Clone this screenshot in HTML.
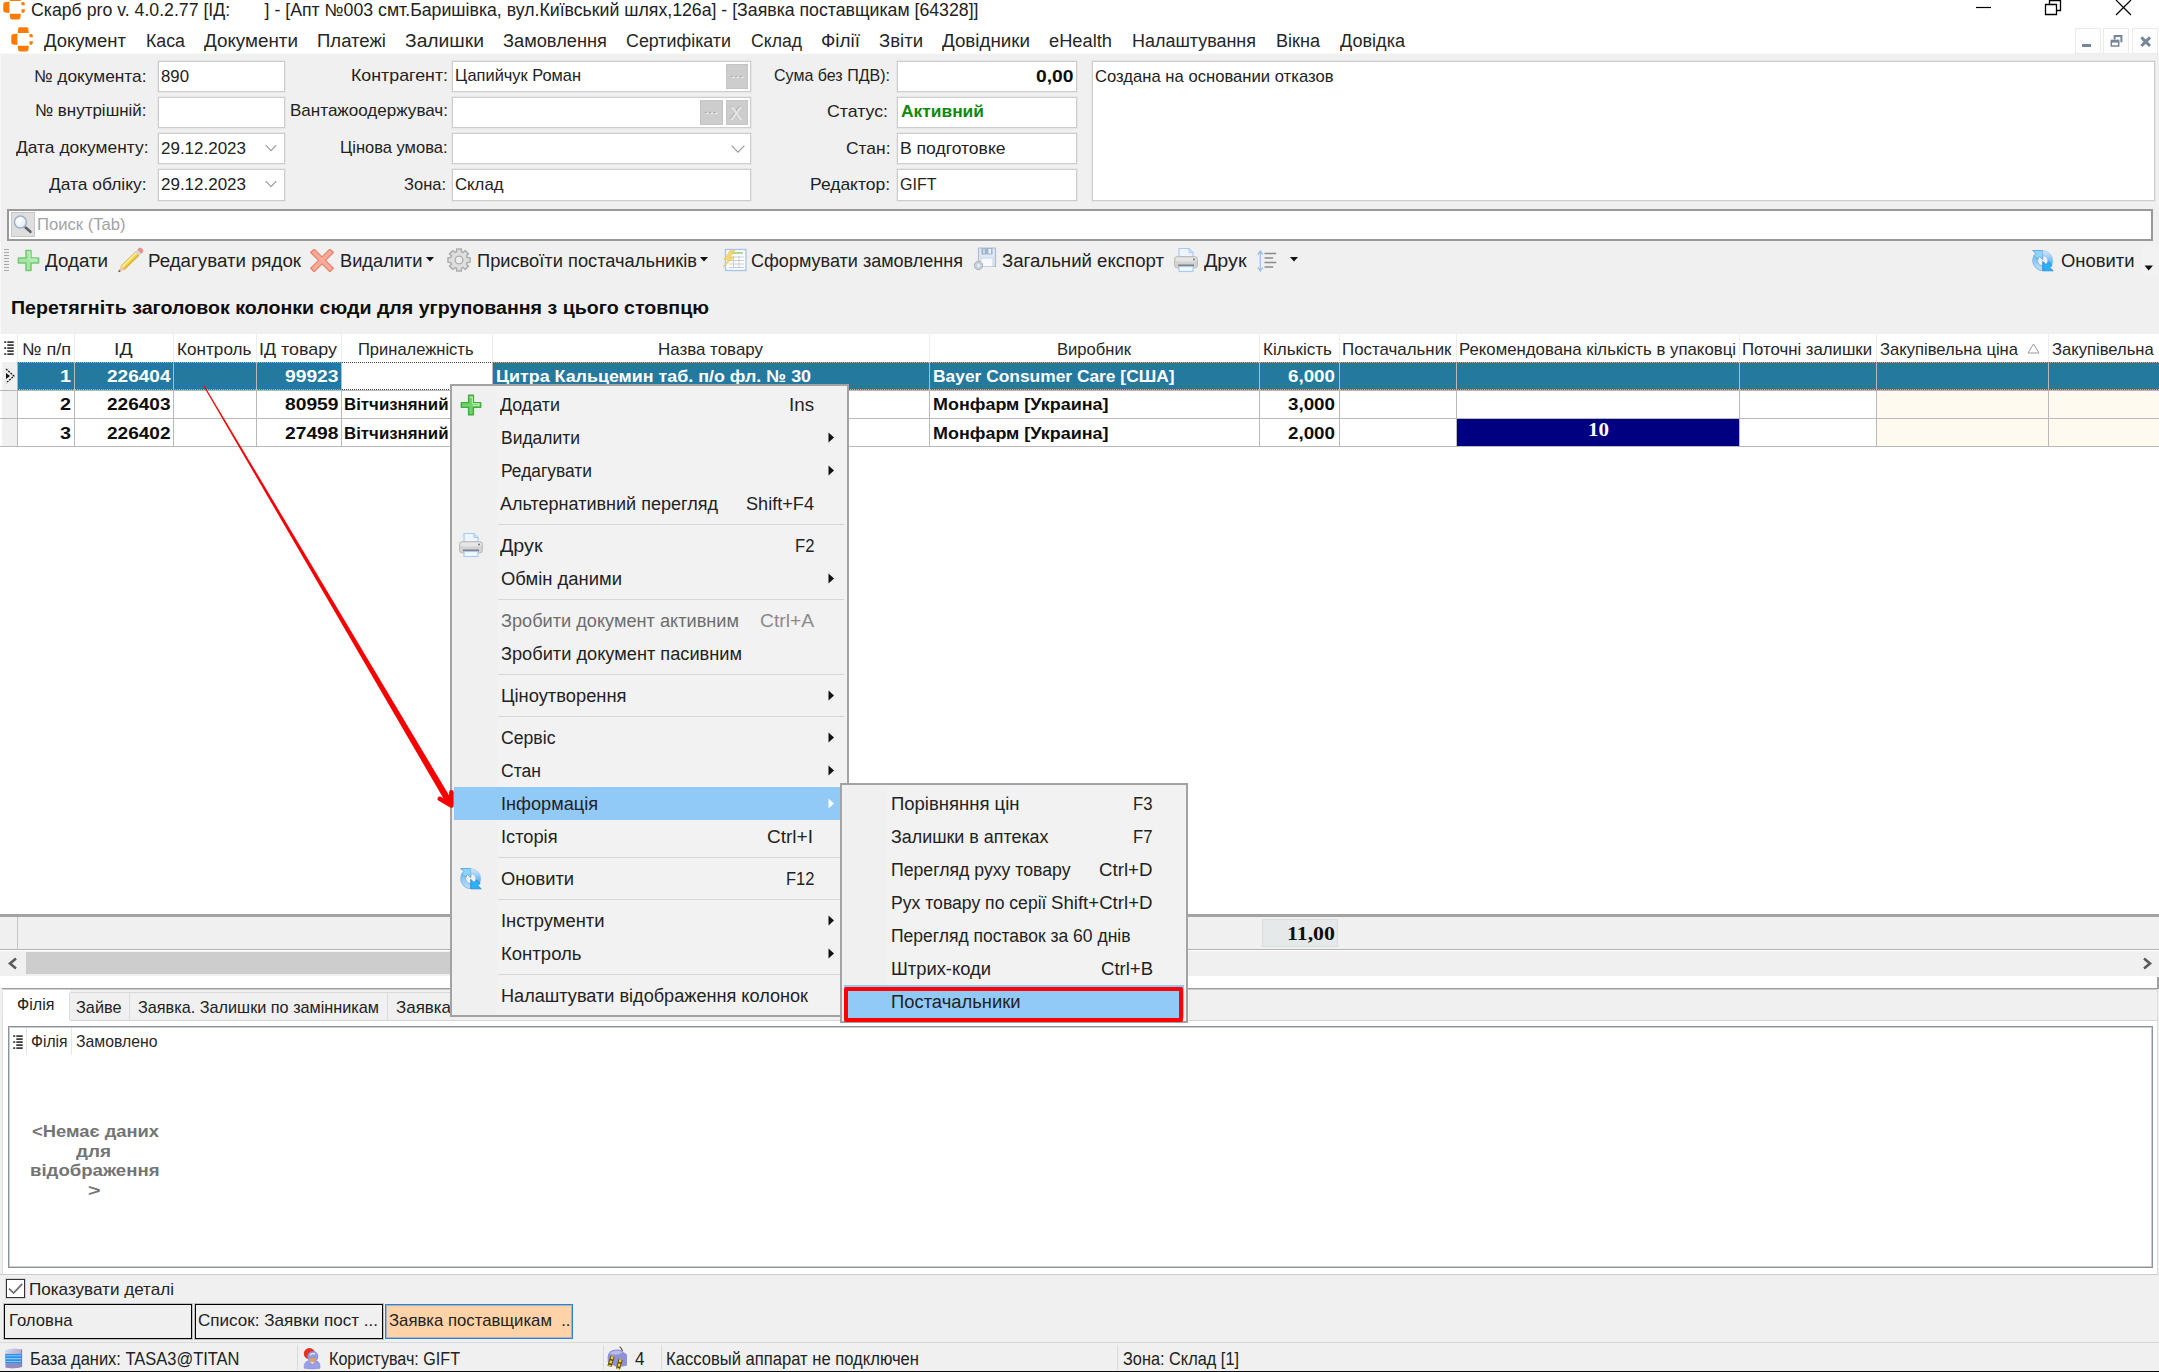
<!DOCTYPE html>
<html lang="uk"><head><meta charset="utf-8"><title>Скарб pro</title>
<style>
html,body{margin:0;padding:0;background:#fff;}
body{width:2159px;height:1372px;overflow:hidden;font-family:"Liberation Sans",sans-serif;}
#root{position:relative;width:2159px;height:1372px;overflow:hidden;background:#fff;}
#root div,#root span.t,#root svg{position:absolute;box-sizing:border-box;}
span.t{white-space:pre;color:#000;transform-origin:0 50%;display:block;}
.b{font-weight:bold;}

</style></head>
<body>
<div id="root">
<div style="left:0px;top:53px;width:2159px;height:281px;background:#f0f0f0"></div>
<div style="left:0px;top:951px;width:2159px;height:25px;background:#f0f0f0"></div>
<div style="left:0px;top:988px;width:2159px;height:384px;background:#f0f0f0"></div>
<svg style="left:2.8px;top:-4.6px" width="22" height="25" viewBox="0 0 22 25"><path d="M6.7 5.9L7.2 1.6Q7.5 0.2 9 0.2H15.5Q17 0.2 17.3 1.6L17.8 5.9Z" fill="#ff7a00"/><path d="M6.4 6.6L1.9 7.2Q0.3 7.5 0.3 9V15.6Q0.3 17.1 1.9 17.4L6.4 18Z" fill="#ff7a00"/><path d="M6.7 18.7L7.2 23Q7.5 24.4 9 24.4H15.5Q17 24.4 17.3 23L17.8 18.7Z" fill="#ff7a00"/><path d="M18.5 6.9H20.3Q21.8 7.2 21.8 8.8V10.3H18.5Z" fill="#ff7a00"/><path d="M18.5 17.7H20.3Q21.8 17.4 21.8 15.8V14.3H18.5Z" fill="#ff7a00"/></svg>
<span class="t " style="top:0px;font-size:17.5px;line-height:20px;height:20px;color:#222222;left:30.5px;transform:scaleX(1.0116);">Скарб pro v. 4.0.2.77 [ІД:       ] - [Апт №003 смт.Баришівка, вул.Київський шлях,126а] - [Заявка поставщикам [64328]]</span>
<svg style="left:1970px;top:0px" width="170" height="20" viewBox="0 0 170 20"><path d="M6 7.5H21" stroke="#000" stroke-width="1.2" fill="none"/><path d="M75.5 4.5H86.5V14.5H75.5Z M79.5 4.5V0.5H90.5V10.5H86.5" stroke="#000" stroke-width="1.3" fill="none"/><path d="M146 0L161 15M161 0L146 15" stroke="#000" stroke-width="1.3" fill="none"/></svg>
<svg style="left:11.4px;top:27px" width="22" height="25" viewBox="0 0 22 25"><path d="M6.7 5.9L7.2 1.6Q7.5 0.2 9 0.2H15.5Q17 0.2 17.3 1.6L17.8 5.9Z" fill="#ff7a00"/><path d="M6.4 6.6L1.9 7.2Q0.3 7.5 0.3 9V15.6Q0.3 17.1 1.9 17.4L6.4 18Z" fill="#ff7a00"/><path d="M6.7 18.7L7.2 23Q7.5 24.4 9 24.4H15.5Q17 24.4 17.3 23L17.8 18.7Z" fill="#ff7a00"/><path d="M18.5 6.9H20.3Q21.8 7.2 21.8 8.8V10.3H18.5Z" fill="#ff7a00"/><path d="M18.5 17.7H20.3Q21.8 17.4 21.8 15.8V14.3H18.5Z" fill="#ff7a00"/></svg>
<span class="t " style="top:31px;font-size:18px;line-height:20px;height:20px;color:#262626;left:44.0px;transform:scaleX(1.0268);">Документ</span>
<span class="t " style="top:31px;font-size:18px;line-height:20px;height:20px;color:#262626;left:146.0px;transform:scaleX(0.9870);">Каса</span>
<span class="t " style="top:31px;font-size:18px;line-height:20px;height:20px;color:#262626;left:204.0px;transform:scaleX(1.0455);">Документи</span>
<span class="t " style="top:31px;font-size:18px;line-height:20px;height:20px;color:#262626;left:317.0px;transform:scaleX(1.0306);">Платежі</span>
<span class="t " style="top:31px;font-size:18px;line-height:20px;height:20px;color:#262626;left:405.0px;transform:scaleX(1.0703);">Залишки</span>
<span class="t " style="top:31px;font-size:18px;line-height:20px;height:20px;color:#262626;left:503.0px;transform:scaleX(1.0140);">Замовлення</span>
<span class="t " style="top:31px;font-size:18px;line-height:20px;height:20px;color:#262626;left:626.0px;transform:scaleX(0.9913);">Сертифікати</span>
<span class="t " style="top:31px;font-size:18px;line-height:20px;height:20px;color:#262626;left:751.0px;transform:scaleX(0.9790);">Склад</span>
<span class="t " style="top:31px;font-size:18px;line-height:20px;height:20px;color:#262626;left:821.0px;transform:scaleX(1.0487);">Філії</span>
<span class="t " style="top:31px;font-size:18px;line-height:20px;height:20px;color:#262626;left:879.0px;transform:scaleX(1.0296);">Звіти</span>
<span class="t " style="top:31px;font-size:18px;line-height:20px;height:20px;color:#262626;left:942.0px;transform:scaleX(1.0426);">Довідники</span>
<span class="t " style="top:31px;font-size:18px;line-height:20px;height:20px;color:#262626;left:1049.0px;transform:scaleX(1.0154);">eHealth</span>
<span class="t " style="top:31px;font-size:18px;line-height:20px;height:20px;color:#262626;left:1132.0px;transform:scaleX(0.9966);">Налаштування</span>
<span class="t " style="top:31px;font-size:18px;line-height:20px;height:20px;color:#262626;left:1276.0px;transform:scaleX(1.0036);">Вікна</span>
<span class="t " style="top:31px;font-size:18px;line-height:20px;height:20px;color:#262626;left:1340.0px;transform:scaleX(1.0039);">Довідка</span>
<div style="left:2075px;top:28px;width:26px;height:26px;background:#fefefe;border:1px solid #ebebeb"></div>
<div style="left:2103px;top:28px;width:26px;height:26px;background:#fefefe;border:1px solid #ebebeb"></div>
<div style="left:2132px;top:28px;width:26px;height:26px;background:#fefefe;border:1px solid #ebebeb"></div>
<svg style="left:2075px;top:28px" width="84" height="26" viewBox="0 0 84 26"><rect x="7" y="16" width="9" height="3" fill="#74869a"/><path d="M39.6 11.5V8.1H46.4V14.3" stroke="#74869a" stroke-width="2" fill="none"/><rect x="35.6" y="11.7" width="8.8" height="2.9" fill="#74869a"/><path d="M36.3 14V18H43.7V14" stroke="#74869a" stroke-width="1.5" fill="none"/><path d="M66.4 9.4L75 18M75 9.4L66.4 18" stroke="#74869a" stroke-width="3" fill="none"/></svg>
<div style="left:0px;top:53px;width:2074px;height:1px;background:#fafafa"></div>
<div style="left:0px;top:53px;width:1px;height:281px;background:#f8f8f8"></div>
<div style="left:158px;top:61px;width:127px;height:31px;background:#fff;border:1px solid #cdcdcd;box-shadow:0 0 0 1px rgba(0,0,0,0.035);"></div>
<div style="left:452px;top:61px;width:299px;height:31px;background:#fff;border:1px solid #cdcdcd;box-shadow:0 0 0 1px rgba(0,0,0,0.035);"></div>
<div style="left:897px;top:61px;width:180px;height:31px;background:#fff;border:1px solid #cdcdcd;box-shadow:0 0 0 1px rgba(0,0,0,0.035);"></div>
<div style="left:158px;top:97px;width:127px;height:31px;background:#fff;border:1px solid #cdcdcd;box-shadow:0 0 0 1px rgba(0,0,0,0.035);"></div>
<div style="left:452px;top:97px;width:299px;height:31px;background:#fff;border:1px solid #cdcdcd;box-shadow:0 0 0 1px rgba(0,0,0,0.035);"></div>
<div style="left:897px;top:97px;width:180px;height:31px;background:#fff;border:1px solid #cdcdcd;box-shadow:0 0 0 1px rgba(0,0,0,0.035);"></div>
<div style="left:158px;top:133px;width:127px;height:31px;background:#fff;border:1px solid #cdcdcd;box-shadow:0 0 0 1px rgba(0,0,0,0.035);"></div>
<div style="left:452px;top:133px;width:299px;height:31px;background:#fff;border:1px solid #cdcdcd;box-shadow:0 0 0 1px rgba(0,0,0,0.035);"></div>
<div style="left:897px;top:133px;width:180px;height:31px;background:#fff;border:1px solid #cdcdcd;box-shadow:0 0 0 1px rgba(0,0,0,0.035);"></div>
<div style="left:158px;top:169px;width:127px;height:32px;background:#fff;border:1px solid #cdcdcd;box-shadow:0 0 0 1px rgba(0,0,0,0.035);"></div>
<div style="left:452px;top:169px;width:299px;height:32px;background:#fff;border:1px solid #cdcdcd;box-shadow:0 0 0 1px rgba(0,0,0,0.035);"></div>
<div style="left:897px;top:169px;width:180px;height:32px;background:#fff;border:1px solid #cdcdcd;box-shadow:0 0 0 1px rgba(0,0,0,0.035);"></div>
<div style="left:1092px;top:61px;width:1063px;height:140px;background:#fff;border:1px solid #cdcdcd;box-shadow:0 0 0 1px rgba(0,0,0,0.035);"></div>
<span class="t " style="top:67px;font-size:17px;line-height:19px;height:19px;color:#222222;left:34.0px;transform:scaleX(1.0174);">№ документа:</span>
<span class="t " style="top:101px;font-size:17px;line-height:19px;height:19px;color:#222222;left:35.0px;transform:scaleX(0.9962);">№ внутрішній:</span>
<span class="t " style="top:138px;font-size:17px;line-height:19px;height:19px;color:#222222;left:15.5px;transform:scaleX(1.0238);">Дата документу:</span>
<span class="t " style="top:175px;font-size:17px;line-height:19px;height:19px;color:#222222;left:49.0px;transform:scaleX(1.0226);">Дата обліку:</span>
<span class="t " style="top:67px;font-size:17px;line-height:19px;height:19px;color:#222222;left:160.5px;transform:scaleX(0.9868);">890</span>
<span class="t " style="top:139px;font-size:17px;line-height:19px;height:19px;color:#222222;left:161.0px;transform:scaleX(0.9989);">29.12.2023</span>
<span class="t " style="top:175px;font-size:17px;line-height:19px;height:19px;color:#222222;left:161.0px;transform:scaleX(0.9989);">29.12.2023</span>
<svg style="left:263px;top:143.2px" width="16" height="10" viewBox="0 0 16 10"><path d="M2.7 2.2L8 7.6L13.3 2.2" stroke="#9c9c9c" stroke-width="1.2" fill="none"/></svg>
<svg style="left:263px;top:179.4px" width="16" height="10" viewBox="0 0 16 10"><path d="M2.7 2.2L8 7.6L13.3 2.2" stroke="#9c9c9c" stroke-width="1.2" fill="none"/></svg>
<svg style="left:729.5px;top:143.6px" width="16" height="10" viewBox="0 0 16 10"><path d="M1.6 1.6L8 8.2L14.4 1.6" stroke="#9a9a9a" stroke-width="1.2" fill="none"/></svg>
<span class="t " style="top:66px;font-size:17px;line-height:19px;height:19px;color:#222222;left:350.5px;transform:scaleX(1.0472);">Контрагент:</span>
<span class="t " style="top:101px;font-size:17px;line-height:19px;height:19px;color:#222222;left:289.5px;transform:scaleX(1.0029);">Вантажоодержувач:</span>
<span class="t " style="top:138px;font-size:17px;line-height:19px;height:19px;color:#222222;left:340.0px;transform:scaleX(0.9712);">Цінова умова:</span>
<span class="t " style="top:175px;font-size:17px;line-height:19px;height:19px;color:#222222;left:404.0px;transform:scaleX(0.9700);">Зона:</span>
<span class="t " style="top:66px;font-size:17px;line-height:19px;height:19px;color:#222222;left:454.5px;transform:scaleX(0.9640);">Цапийчук Роман</span>
<span class="t " style="top:175px;font-size:17px;line-height:19px;height:19px;color:#222222;left:454.5px;transform:scaleX(0.9857);">Склад</span>
<div style="left:726px;top:64px;width:22px;height:25px;background:#cdcdcd;border:1px solid #c5c5c5;"></div>
<div style="left:700px;top:100px;width:23px;height:25px;background:#cdcdcd;border:1px solid #c5c5c5;"></div>
<div style="left:726px;top:100px;width:22px;height:25px;background:#cdcdcd;border:1px solid #c5c5c5;"></div>
<span class="t " style="top:68px;font-size:11px;line-height:12px;height:12px;color:#fafafa;left:730.5px;transform:scaleX(1.4719);text-shadow:-1px -1px 0 #a0a0a0;">...</span>
<span class="t " style="top:104px;font-size:11px;line-height:12px;height:12px;color:#fafafa;left:705.0px;transform:scaleX(1.4719);text-shadow:-1px -1px 0 #a0a0a0;">...</span>
<span class="t " style="top:104px;font-size:18px;line-height:20px;height:20px;color:#e9e9e9;left:730.0px;transform:scaleX(1.0403);text-shadow:-1px -1px 0 #b4b4b4;">X</span>
<span class="t " style="top:66px;font-size:17px;line-height:19px;height:19px;color:#222222;left:774.0px;transform:scaleX(0.9426);">Сума без ПДВ):</span>
<span class="t " style="top:102px;font-size:17px;line-height:19px;height:19px;color:#222222;left:826.5px;transform:scaleX(1.0433);">Статус:</span>
<span class="t " style="top:139px;font-size:17px;line-height:19px;height:19px;color:#222222;left:845.5px;transform:scaleX(1.0241);">Стан:</span>
<span class="t " style="top:175px;font-size:17px;line-height:19px;height:19px;color:#222222;left:810.0px;transform:scaleX(1.0269);">Редактор:</span>
<span class="t " style="top:67px;font-size:17px;line-height:19px;height:19px;color:#0d0d0d;font-weight:bold;left:1035.5px;transform:scaleX(1.1331);">0,00</span>
<span class="t " style="top:102px;font-size:17px;line-height:19px;height:19px;color:#0b8a0b;font-weight:bold;left:900.5px;transform:scaleX(1.0223);">Активний</span>
<span class="t " style="top:139px;font-size:17px;line-height:19px;height:19px;color:#222222;left:899.5px;transform:scaleX(1.0308);">В подготовке</span>
<span class="t " style="top:175px;font-size:17px;line-height:19px;height:19px;color:#222222;left:900.0px;transform:scaleX(0.9427);">GIFT</span>
<span class="t " style="top:67px;font-size:17px;line-height:19px;height:19px;color:#222222;left:1095.0px;transform:scaleX(0.9786);">Создана на основании отказов</span>
<div style="left:7px;top:209px;width:2146px;height:32px;background:#fff;border:2px solid #999;"></div>
<div style="left:11px;top:212px;width:24px;height:25px;background:#dedede;border:1px solid #c6c6c6;"></div>
<svg style="left:12px;top:213px" width="22" height="24" viewBox="0 0 22 24"><defs><radialGradient id="mg" cx="0.4" cy="0.35" r="0.8"><stop offset="0" stop-color="#ffffff"/><stop offset="1" stop-color="#dbe6fb"/></radialGradient></defs><path d="M13.6 14.6L18.4 18.8" stroke="#5b5f66" stroke-width="2.6" stroke-linecap="round"/><circle cx="8.4" cy="9" r="6" fill="url(#mg)" stroke="#9fb0c6" stroke-width="1.5"/></svg>
<span class="t " style="top:215px;font-size:17px;line-height:19px;height:19px;color:#a2a2a8;left:36.5px;transform:scaleX(0.9772);">Поиск (Tab)</span>
<div style="left:4px;top:249px;width:5px;height:1px;background:#a8a8a8"></div>
<div style="left:4px;top:252px;width:5px;height:1px;background:#a8a8a8"></div>
<div style="left:4px;top:255px;width:5px;height:1px;background:#a8a8a8"></div>
<div style="left:4px;top:258px;width:5px;height:1px;background:#a8a8a8"></div>
<div style="left:4px;top:261px;width:5px;height:1px;background:#a8a8a8"></div>
<div style="left:4px;top:264px;width:5px;height:1px;background:#a8a8a8"></div>
<div style="left:4px;top:267px;width:5px;height:1px;background:#a8a8a8"></div>
<div style="left:4px;top:270px;width:5px;height:1px;background:#a8a8a8"></div>
<svg style="left:17px;top:249px" width="23" height="23" viewBox="0 0 23 23"><path d="M9 1.4H14V9H21.6V14H14V21.6H9V14H1.4V9H9Z" fill="#a6e6a2" stroke="#72c970" stroke-width="1.5" stroke-linejoin="round"/><path d="M10 3.2H13V10H19.8V12H13" stroke="#d4f5d2" stroke-width="1.2" fill="none" opacity="0.7"/></svg>
<span class="t " style="top:251px;font-size:18px;line-height:20px;height:20px;color:#222222;left:45.0px;transform:scaleX(1.0424);">Додати</span>
<svg style="left:117px;top:247px" width="28" height="26" viewBox="0 0 28 26"><path d="M7.50 22.71L22.08 8.56L18.45 4.83L3.88 18.98Z" fill="#f3d24c" stroke="#d0a93a" stroke-width="0.6"/><path d="M5.51 20.66L20.08 6.51L18.91 5.30L4.33 19.44Z" fill="#fbeb9a"/><path d="M7.50 22.71L22.08 8.56L21.08 7.54L6.51 21.68Z" fill="#ddb43e"/><path d="M22.08 8.56L24.37 6.33L20.75 2.60L18.45 4.83Z" fill="#cfd4da"/><path d="M24.37 6.33L25.95 4.80L25.72 2.85L24.28 1.35L22.33 1.07L20.75 2.60Z" fill="#f28b86" stroke="#e77a76" stroke-width="0.5" stroke-linejoin="round"/><path d="M1.10 25.30L7.50 22.71L3.88 18.98Z" fill="#f6c7a4"/><path d="M1.10 25.30L3.80 24.20L2.28 22.64Z" fill="#4a4a4a"/></svg>
<span class="t " style="top:251px;font-size:18px;line-height:20px;height:20px;color:#222222;left:148.0px;transform:scaleX(1.0398);">Редагувати рядок</span>
<svg style="left:310px;top:249px" width="24" height="23" viewBox="0 0 24 23"><path d="M19.88 0.05L23.35 3.52L15.46 11.40L23.35 19.28L19.88 22.75L12.00 14.86L4.12 22.75L0.65 19.28L8.54 11.40L0.65 3.52L4.12 0.05L12.00 7.94Z" fill="#f6ab99" stroke="#ec806b" stroke-width="1.2" stroke-linejoin="round"/></svg>
<span class="t " style="top:251px;font-size:18px;line-height:20px;height:20px;color:#222222;left:339.5px;transform:scaleX(1.0130);">Видалити</span>
<svg style="left:426px;top:257px" width="8" height="5" viewBox="0 0 8 5"><path d="M0 0H8L4 4.5Z" fill="#111"/></svg>
<svg style="left:445.8px;top:246.8px" width="26" height="26" viewBox="0 0 26 26"><path d="M10.64 1.95L15.36 1.95L15.38 4.73L17.16 5.48L19.15 3.52L22.48 6.85L20.52 8.84L21.27 10.62L24.05 10.64L24.05 15.36L21.27 15.38L20.52 17.16L22.48 19.15L19.15 22.48L17.16 20.52L15.38 21.27L15.36 24.05L10.64 24.05L10.62 21.27L8.84 20.52L6.85 22.48L3.52 19.15L5.48 17.16L4.73 15.38L1.95 15.36L1.95 10.64L4.73 10.62L5.48 8.84L3.52 6.85L6.85 3.52L8.84 5.48L10.62 4.73Z" fill="#dfdfdf" stroke="#aeaeae" stroke-width="1.5" stroke-linejoin="round"/><circle cx="13" cy="13" r="3.9" fill="#ececec" stroke="#ababab" stroke-width="1.3"/></svg>
<span class="t " style="top:251px;font-size:18px;line-height:20px;height:20px;color:#222222;left:476.5px;transform:scaleX(1.0148);">Присвоїти постачальників</span>
<svg style="left:700px;top:257px" width="8" height="5" viewBox="0 0 8 5"><path d="M0 0H8L4 4.5Z" fill="#111"/></svg>
<svg style="left:721px;top:248px" width="26" height="24" viewBox="0 0 26 24"><rect x="4.5" y="1.5" width="20.5" height="21" fill="#fdfdfd" stroke="#a9c6ea" stroke-width="1.4"/><path d="M9 5H22" stroke="#86c96c" stroke-width="1.4"/><path d="M8 9H23M8 12.5H23M8 16H23M8 19.5H23M12.5 8V20M18 8V20" stroke="#c9cdd3" stroke-width="1"/><path d="M9 2.5L3 11.5H7.5L2 19L13 9.5H8.8L14 2.5Z" fill="#f6d66a" stroke="#eec64a" stroke-width="0.6" opacity="0.95"/></svg>
<span class="t " style="top:251px;font-size:18px;line-height:20px;height:20px;color:#222222;left:751.0px;transform:scaleX(1.0018);">Сформувати замовлення</span>
<svg style="left:972px;top:246px" width="26" height="26" viewBox="0 0 26 26"><path d="M6.5 2H23.5V20.5H6.5Z" fill="#dfe7f1" stroke="#aebdd2" stroke-width="1.2"/><rect x="9.5" y="2" width="11" height="6.5" fill="#9fb6d3"/><rect x="16.5" y="3" width="2.5" height="4.5" fill="#eef3f9"/><rect x="11" y="3" width="2" height="4.5" fill="#c9d6e6"/><rect x="9" y="12" width="12" height="8.5" fill="#f7f9fc" stroke="#c4cfde" stroke-width="0.8"/><circle cx="6.5" cy="19.5" r="4.2" fill="#c9d0d9" stroke="#aab4c0" stroke-width="1"/><circle cx="6.5" cy="19.5" r="1.5" fill="#eef1f4"/></svg>
<span class="t " style="top:251px;font-size:18px;line-height:20px;height:20px;color:#222222;left:1002.0px;transform:scaleX(1.0338);">Загальний експорт</span>
<svg style="left:1173px;top:247px" width="26" height="26" viewBox="0 0 26 26"><path d="M6 1.5H16L20 5.5V10H6Z" fill="#eef5ff" stroke="#a9cbf3" stroke-width="1.2"/><path d="M16 1.5V5.5H20" fill="#cfe3fb" stroke="#a9cbf3" stroke-width="1"/><rect x="1.5" y="9.5" width="23" height="11.5" rx="3" fill="#d2d2d2" stroke="#bdbdbd" stroke-width="1"/><rect x="2.5" y="10.5" width="21" height="4" rx="2" fill="#e6e6e6"/><rect x="5" y="17.5" width="16" height="2.2" fill="#7d7d7d"/><rect x="6" y="19.5" width="14" height="5" fill="#f2f8ff" stroke="#a9cbf3" stroke-width="1.2"/><circle cx="21" cy="12.5" r="0.9" fill="#666"/></svg>
<span class="t " style="top:251px;font-size:18px;line-height:20px;height:20px;color:#222222;left:1203.5px;transform:scaleX(1.0932);">Друк</span>
<svg style="left:1256px;top:249.6px" width="22" height="22" viewBox="0 0 22 22"><path d="M4.3 1.5V20.5M1.8 4.5L4.3 1L6.8 4.5M1.8 17.5L4.3 21L6.8 17.5" stroke="#9cc2ef" stroke-width="1.3" fill="none"/><path d="M8.5 3.6H20.2M8.5 8.1H17.2M8.5 12.6H20.2M8.5 17.1H17.2" stroke="#8a8a8a" stroke-width="1.5"/></svg>
<svg style="left:1290px;top:257px" width="8" height="5" viewBox="0 0 8 5"><path d="M0 0H8L4 4.5Z" fill="#111"/></svg>
<svg style="left:2032px;top:249.5px" width="22" height="22" viewBox="0 0 22 22"><defs><linearGradient id="r1a" x1="0" y1="0" x2="0" y2="1"><stop offset="0" stop-color="#6fbcf0"/><stop offset="1" stop-color="#bfe1f7"/></linearGradient><linearGradient id="r1b" x1="0" y1="0" x2="0" y2="1"><stop offset="0" stop-color="#dbeaf7"/><stop offset="1" stop-color="#3fa9f0"/></linearGradient></defs><path d="M10.8 20.6A10 10 0 0 1 2.4 5.2L6.6 7.6A5.2 5.2 0 0 0 10.8 15.8Z" fill="url(#r1a)" stroke="#63a8e2" stroke-width="0.7"/><path d="M0.6 0.5H10.8V9.6L7.6 6.6L5.2 9L1.8 5.6L4 3.4Z" fill="#8dd3fa" stroke="#5aa5e6" stroke-width="0.9" stroke-linejoin="round"/><path d="M10.8 0.8A10 10 0 0 1 19.4 15.8L15 13.4A5.2 5.2 0 0 0 10.8 5.6Z" fill="url(#r1b)" stroke="#8fc0ea" stroke-width="0.6"/><path d="M21.2 20.8H10.8V11.4L14 14.6L16.6 12L20 15.4L17.8 17.6Z" fill="#25b3fb" stroke="#2f8ad6" stroke-width="0.9" stroke-linejoin="round"/></svg>
<span class="t " style="top:251px;font-size:18px;line-height:20px;height:20px;color:#222222;left:2060.5px;transform:scaleX(1.0226);">Оновити</span>
<div style="left:2142px;top:245px;width:17px;height:30px;background:#f2f2f2"></div>
<svg style="left:2144px;top:265px" width="10" height="6" viewBox="0 0 10 6"><path d="M0.5 0.5H9L4.7 5.5Z" fill="#111"/></svg>
<span class="t " style="top:298px;font-size:18px;line-height:20px;height:20px;color:#0d0d0d;font-weight:bold;left:11.0px;transform:scaleX(1.0892);">Перетягніть заголовок колонки сюди для угруповання з цього стовпцю</span>
<div style="left:0px;top:334px;width:2159px;height:28px;background:#fff"></div>
<div style="left:17px;top:334px;width:1px;height:28px;background:#ededed"></div>
<div style="left:74px;top:334px;width:1px;height:28px;background:#ededed"></div>
<div style="left:173px;top:334px;width:1px;height:28px;background:#ededed"></div>
<div style="left:256px;top:334px;width:1px;height:28px;background:#ededed"></div>
<div style="left:341px;top:334px;width:1px;height:28px;background:#ededed"></div>
<div style="left:492px;top:334px;width:1px;height:28px;background:#ededed"></div>
<div style="left:929px;top:334px;width:1px;height:28px;background:#ededed"></div>
<div style="left:1259px;top:334px;width:1px;height:28px;background:#ededed"></div>
<div style="left:1339px;top:334px;width:1px;height:28px;background:#ededed"></div>
<div style="left:1456px;top:334px;width:1px;height:28px;background:#ededed"></div>
<div style="left:1739px;top:334px;width:1px;height:28px;background:#ededed"></div>
<div style="left:1876px;top:334px;width:1px;height:28px;background:#ededed"></div>
<div style="left:2048px;top:334px;width:1px;height:28px;background:#ededed"></div>
<svg style="left:4px;top:341px" width="10" height="14" viewBox="0 0 10 14"><rect x="3.3" y="0.3" width="6.4" height="1.6" fill="#2a2a2a"/><rect x="0.2" y="0.3" width="2" height="1.6" fill="#2a2a2a"/><rect x="3.3" y="3.3" width="6.4" height="1.6" fill="#2a2a2a"/><rect x="3.3" y="6.3" width="6.4" height="1.6" fill="#2a2a2a"/><rect x="0.2" y="6.3" width="2" height="1.6" fill="#2a2a2a"/><rect x="3.3" y="9.3" width="6.4" height="1.6" fill="#2a2a2a"/><rect x="3.3" y="12.3" width="6.4" height="1.6" fill="#2a2a2a"/><rect x="0.2" y="12.3" width="2" height="1.6" fill="#2a2a2a"/></svg>
<span class="t " style="top:340px;font-size:17px;line-height:19px;height:19px;color:#262626;left:21.5px;transform:scaleX(1.0627);">№ п/п</span>
<span class="t " style="top:340px;font-size:17px;line-height:19px;height:19px;color:#262626;left:113.5px;transform:scaleX(1.1385);">ІД</span>
<span class="t " style="top:340px;font-size:17px;line-height:19px;height:19px;color:#262626;left:176.5px;transform:scaleX(1.0089);">Контроль</span>
<span class="t " style="top:340px;font-size:17px;line-height:19px;height:19px;color:#262626;left:259.0px;transform:scaleX(1.0529);">ІД товару</span>
<span class="t " style="top:340px;font-size:17px;line-height:19px;height:19px;color:#262626;left:358.0px;transform:scaleX(0.9715);">Приналежність</span>
<span class="t " style="top:340px;font-size:17px;line-height:19px;height:19px;color:#262626;left:658.0px;transform:scaleX(0.9956);">Назва товару</span>
<span class="t " style="top:340px;font-size:17px;line-height:19px;height:19px;color:#262626;left:1057.0px;transform:scaleX(0.9761);">Виробник</span>
<span class="t " style="top:340px;font-size:17px;line-height:19px;height:19px;color:#262626;left:1263.0px;transform:scaleX(1.0025);">Кількість</span>
<span class="t " style="top:340px;font-size:17px;line-height:19px;height:19px;color:#262626;left:1342.0px;transform:scaleX(0.9931);">Постачальник</span>
<span class="t " style="top:340px;font-size:17px;line-height:19px;height:19px;color:#262626;left:1459.0px;transform:scaleX(0.9875);">Рекомендована кількість в упаковці</span>
<span class="t " style="top:340px;font-size:17px;line-height:19px;height:19px;color:#262626;left:1742.0px;transform:scaleX(0.9851);">Поточні залишки</span>
<span class="t " style="top:340px;font-size:17px;line-height:19px;height:19px;color:#262626;left:1879.5px;transform:scaleX(0.9769);">Закупівельна ціна</span>
<span class="t " style="top:340px;font-size:17px;line-height:19px;height:19px;color:#262626;left:2052.0px;transform:scaleX(0.9769);">Закупівельна ціна</span>
<svg style="left:2027px;top:343px" width="13" height="11" viewBox="0 0 13 11"><path d="M6.5 1L12 10H1Z" stroke="#9a9a9a" stroke-width="1" fill="#fff"/></svg>
<div style="left:0px;top:362px;width:17px;height:84px;background:#f0f0f0"></div>
<div style="left:0px;top:362px;width:2px;height:84px;background:#fff"></div>
<div style="left:17px;top:362px;width:2142px;height:28px;background:#24799f"></div>
<div style="left:342px;top:362px;width:150px;height:28px;background:#fff"></div>
<div style="left:0px;top:390px;width:2159px;height:1px;background:#b9b9b9"></div>
<div style="left:0px;top:418px;width:2159px;height:1px;background:#b9b9b9"></div>
<div style="left:0px;top:446px;width:2159px;height:1px;background:#b9b9b9"></div>
<div style="left:17px;top:362px;width:1px;height:84px;background:#b9b9b9"></div>
<div style="left:74px;top:362px;width:1px;height:84px;background:#b9b9b9"></div>
<div style="left:173px;top:362px;width:1px;height:84px;background:#b9b9b9"></div>
<div style="left:256px;top:362px;width:1px;height:84px;background:#b9b9b9"></div>
<div style="left:341px;top:362px;width:1px;height:84px;background:#b9b9b9"></div>
<div style="left:492px;top:362px;width:1px;height:84px;background:#b9b9b9"></div>
<div style="left:929px;top:362px;width:1px;height:84px;background:#b9b9b9"></div>
<div style="left:1259px;top:362px;width:1px;height:84px;background:#b9b9b9"></div>
<div style="left:1339px;top:362px;width:1px;height:84px;background:#b9b9b9"></div>
<div style="left:1456px;top:362px;width:1px;height:84px;background:#b9b9b9"></div>
<div style="left:1739px;top:362px;width:1px;height:84px;background:#b9b9b9"></div>
<div style="left:1876px;top:362px;width:1px;height:84px;background:#b9b9b9"></div>
<div style="left:2048px;top:362px;width:1px;height:84px;background:#b9b9b9"></div>
<div style="left:1877px;top:391px;width:171px;height:27px;background:#fffaf0"></div>
<div style="left:2049px;top:391px;width:110px;height:27px;background:#fffaf0"></div>
<div style="left:1877px;top:419px;width:171px;height:27px;background:#fffaf0"></div>
<div style="left:2049px;top:419px;width:110px;height:27px;background:#fffaf0"></div>
<div style="left:1457px;top:419px;width:282px;height:27px;background:#000080"></div>
<div style="left:17px;top:362px;width:324px;height:1px;background:repeating-linear-gradient(90deg,#d9a184 0 1px,transparent 1px 2px)"></div>
<div style="left:17px;top:389px;width:324px;height:1px;background:repeating-linear-gradient(90deg,#d9a184 0 1px,transparent 1px 2px)"></div>
<div style="left:492px;top:362px;width:1667px;height:1px;background:repeating-linear-gradient(90deg,#d9a184 0 1px,transparent 1px 2px)"></div>
<div style="left:492px;top:389px;width:1667px;height:1px;background:repeating-linear-gradient(90deg,#d9a184 0 1px,transparent 1px 2px)"></div>
<div style="left:342px;top:362px;width:150px;height:1px;background:repeating-linear-gradient(90deg,#444 0 1px,transparent 1px 2px)"></div>
<div style="left:342px;top:389px;width:150px;height:1px;background:repeating-linear-gradient(90deg,#444 0 1px,transparent 1px 2px)"></div>
<div style="left:17px;top:362px;width:1px;height:28px;background:repeating-linear-gradient(180deg,#d9a184 0 1px,transparent 1px 2px)"></div>
<svg style="left:5px;top:368px" width="10" height="16" viewBox="0 0 10 16"><path d="M1 1L9 8L1 15" stroke="#111" stroke-width="1.2" fill="none" stroke-dasharray="2 1"/><path d="M1 5L5 8L1 11Z" fill="#111"/></svg>
<span class="t " style="top:367px;font-size:17px;line-height:19px;height:19px;color:#fff;font-weight:bold;left:59.5px;transform:scaleX(1.1617);">1</span>
<span class="t " style="top:367px;font-size:17px;line-height:19px;height:19px;color:#fff;font-weight:bold;left:106.5px;transform:scaleX(1.1193);">226404</span>
<span class="t " style="top:367px;font-size:17px;line-height:19px;height:19px;color:#fff;font-weight:bold;left:284.5px;transform:scaleX(1.1315);">99923</span>
<span class="t " style="top:367px;font-size:17px;line-height:19px;height:19px;color:#fff;font-weight:bold;left:496.0px;transform:scaleX(1.0505);">Цитра Кальцемин таб. п/о фл. № 30</span>
<span class="t " style="top:367px;font-size:17px;line-height:19px;height:19px;color:#fff;font-weight:bold;left:933.0px;transform:scaleX(1.0222);">Bayer Consumer Care [США]</span>
<span class="t " style="top:367px;font-size:17px;line-height:19px;height:19px;color:#fff;font-weight:bold;left:1288.0px;transform:scaleX(1.1047);">6,000</span>
<span class="t " style="top:395px;font-size:17px;line-height:19px;height:19px;color:#0d0d0d;font-weight:bold;left:59.5px;transform:scaleX(1.1617);">2</span>
<span class="t " style="top:395px;font-size:17px;line-height:19px;height:19px;color:#0d0d0d;font-weight:bold;left:106.5px;transform:scaleX(1.1193);">226403</span>
<span class="t " style="top:395px;font-size:17px;line-height:19px;height:19px;color:#0d0d0d;font-weight:bold;left:284.5px;transform:scaleX(1.1315);">80959</span>
<span class="t " style="top:395px;font-size:17px;line-height:19px;height:19px;color:#0d0d0d;font-weight:bold;left:344.0px;transform:scaleX(0.9910);">Вітчизняний</span>
<span class="t " style="top:395px;font-size:17px;line-height:19px;height:19px;color:#0d0d0d;font-weight:bold;left:933.0px;transform:scaleX(1.0548);">Монфарм [Украина]</span>
<span class="t " style="top:395px;font-size:17px;line-height:19px;height:19px;color:#0d0d0d;font-weight:bold;left:1288.0px;transform:scaleX(1.1047);">3,000</span>
<span class="t " style="top:424px;font-size:17px;line-height:19px;height:19px;color:#0d0d0d;font-weight:bold;left:59.5px;transform:scaleX(1.1617);">3</span>
<span class="t " style="top:424px;font-size:17px;line-height:19px;height:19px;color:#0d0d0d;font-weight:bold;left:106.5px;transform:scaleX(1.1193);">226402</span>
<span class="t " style="top:424px;font-size:17px;line-height:19px;height:19px;color:#0d0d0d;font-weight:bold;left:284.5px;transform:scaleX(1.1315);">27498</span>
<span class="t " style="top:424px;font-size:17px;line-height:19px;height:19px;color:#0d0d0d;font-weight:bold;left:344.0px;transform:scaleX(0.9910);">Вітчизняний</span>
<span class="t " style="top:424px;font-size:17px;line-height:19px;height:19px;color:#0d0d0d;font-weight:bold;left:933.0px;transform:scaleX(1.0548);">Монфарм [Украина]</span>
<span class="t " style="top:424px;font-size:17px;line-height:19px;height:19px;color:#0d0d0d;font-weight:bold;left:1288.0px;transform:scaleX(1.1047);">2,000</span>
<span class="t " style="top:420px;font-size:18px;line-height:20px;height:20px;color:#fff;font-weight:bold;font-family:'Liberation Serif',serif;left:1587.5px;transform:scaleX(1.1667);">10</span>
<div style="left:0px;top:914px;width:2159px;height:3px;background:#a3a3a3"></div>
<div style="left:0px;top:917px;width:2159px;height:32px;background:#f0f0f0"></div>
<div style="left:17px;top:917px;width:1px;height:32px;background:#c4c4c4"></div>
<div style="left:0px;top:949px;width:2159px;height:1px;background:#b2b2b2"></div>
<div style="left:1262px;top:919px;width:76px;height:28px;background:#e6e9ea;border:1px solid #dcdddd"></div>
<span class="t " style="top:924px;font-size:18px;line-height:20px;height:20px;color:#0d0d0d;font-weight:bold;font-family:'Liberation Serif',serif;left:1286.5px;transform:scaleX(1.2147);">11,00</span>
<div style="left:26px;top:952px;width:1000px;height:22px;background:#cdcdcd"></div>
<svg style="left:7px;top:957px" width="11" height="13" viewBox="0 0 11 13"><path d="M9 1.5L3 6.5L9 11.5" stroke="#5a5a5a" stroke-width="2.6" fill="none"/></svg>
<svg style="left:2142px;top:957px" width="11" height="13" viewBox="0 0 11 13"><path d="M2 1.5L8 6.5L2 11.5" stroke="#5a5a5a" stroke-width="2.6" fill="none"/></svg>
<div style="left:2px;top:988px;width:2156px;height:1px;background:#9c9c9c"></div>
<div style="left:2px;top:989px;width:2156px;height:1px;background:rgba(156,156,156,0.45)"></div>
<div style="left:2157px;top:977px;width:2px;height:12px;background:#a0a0a0"></div>
<div style="left:2157px;top:989px;width:1px;height:286px;background:#dcdcdc"></div>
<div style="left:3px;top:989px;width:67px;height:33px;background:#fff;"></div>
<div style="left:3px;top:989px;width:67px;height:1px;background:rgba(156,156,156,0.45)"></div>
<div style="left:2px;top:989px;width:1px;height:32px;background:#e2e2e2"></div>
<div style="left:70px;top:992px;width:380px;height:1px;background:#dadada"></div>
<div style="left:69px;top:993px;width:1px;height:27px;background:#dcdcdc"></div>
<div style="left:129px;top:993px;width:1px;height:27px;background:#dcdcdc"></div>
<div style="left:387px;top:993px;width:1px;height:27px;background:#dcdcdc"></div>
<div style="left:70px;top:1020px;width:2087px;height:1px;background:#d6d6d6"></div>
<span class="t " style="top:995px;font-size:17px;line-height:19px;height:19px;color:#222222;left:16.5px;transform:scaleX(0.9467);">Філія</span>
<span class="t " style="top:998px;font-size:17px;line-height:19px;height:19px;color:#222222;left:75.5px;transform:scaleX(0.9576);">Зайве</span>
<span class="t " style="top:998px;font-size:17px;line-height:19px;height:19px;color:#222222;left:138.0px;transform:scaleX(0.9547);">Заявка. Залишки по замінникам</span>
<span class="t " style="top:998px;font-size:17px;line-height:19px;height:19px;color:#222222;left:396.0px;transform:scaleX(0.9958);">Заявка</span>
<div style="left:3px;top:1021px;width:2154px;height:253px;background:#fff"></div>
<div style="left:2px;top:1021px;width:1px;height:253px;background:#dcdcdc"></div>
<div style="left:8px;top:1026px;width:2145px;height:242px;background:#fff;border:1px solid #8d939b;box-shadow:0 0 0 1px #c9ccd1 inset"></div>
<svg style="left:13px;top:1034.5px" width="10" height="14" viewBox="0 0 10 14"><rect x="3.3" y="0.3" width="6.4" height="1.6" fill="#2a2a2a"/><rect x="0.2" y="0.3" width="2" height="1.6" fill="#2a2a2a"/><rect x="3.3" y="3.3" width="6.4" height="1.6" fill="#2a2a2a"/><rect x="3.3" y="6.3" width="6.4" height="1.6" fill="#2a2a2a"/><rect x="0.2" y="6.3" width="2" height="1.6" fill="#2a2a2a"/><rect x="3.3" y="9.3" width="6.4" height="1.6" fill="#2a2a2a"/><rect x="3.3" y="12.3" width="6.4" height="1.6" fill="#2a2a2a"/><rect x="0.2" y="12.3" width="2" height="1.6" fill="#2a2a2a"/></svg>
<div style="left:26px;top:1028px;width:1px;height:27px;background:#e6e6e6"></div>
<div style="left:71px;top:1028px;width:1px;height:27px;background:#e6e6e6"></div>
<span class="t " style="top:1032px;font-size:17px;line-height:19px;height:19px;color:#262626;left:30.5px;transform:scaleX(0.9215);">Філія</span>
<span class="t " style="top:1032px;font-size:17px;line-height:19px;height:19px;color:#262626;left:75.5px;transform:scaleX(0.9289);">Замовлено</span>
<span class="t " style="top:1123px;font-size:16px;line-height:17px;height:17px;color:#747474;font-weight:bold;left:32.0px;transform:scaleX(1.1458);">&lt;Немає даних</span>
<span class="t " style="top:1143px;font-size:16px;line-height:17px;height:17px;color:#747474;font-weight:bold;left:76.0px;transform:scaleX(1.1802);">для</span>
<span class="t " style="top:1162px;font-size:16px;line-height:17px;height:17px;color:#747474;font-weight:bold;left:29.5px;transform:scaleX(1.1618);">відображення</span>
<span class="t " style="top:1182px;font-size:16px;line-height:17px;height:17px;color:#747474;font-weight:bold;left:87.5px;transform:scaleX(1.3378);">&gt;</span>
<div style="left:0px;top:1274px;width:2158px;height:1px;background:#cdcdcd"></div>
<div style="left:6px;top:1279px;width:19px;height:19px;background:#fff;border:1px solid #333;box-shadow:0 0 0 1px rgba(0,0,0,0.12)"></div>
<svg style="left:6px;top:1279px" width="20" height="19" viewBox="0 0 20 19"><path d="M3 9.6L7.6 14L16.2 4.8" stroke="#6c6c6c" stroke-width="1.7" fill="none"/></svg>
<span class="t " style="top:1280px;font-size:17px;line-height:19px;height:19px;color:#222222;left:28.5px;transform:scaleX(1.0045);">Показувати деталі</span>
<div style="left:4px;top:1304px;width:188px;height:35px;background:#f0f0f0;border:1px solid #000;box-shadow:0 0 0 1px rgba(0,0,0,0.2)"></div>
<div style="left:195px;top:1304px;width:188px;height:35px;background:#f0f0f0;border:1px solid #000;box-shadow:0 0 0 1px rgba(0,0,0,0.2)"></div>
<div style="left:385px;top:1304px;width:188px;height:35px;background:#ffd3a7;border:1px solid #2a82da;box-shadow:0 0 0 1px rgba(42,130,218,0.4) inset"></div>
<span class="t " style="top:1311px;font-size:17px;line-height:19px;height:19px;color:#222222;left:8.5px;transform:scaleX(0.9831);">Головна</span>
<span class="t " style="top:1311px;font-size:17px;line-height:19px;height:19px;color:#222222;left:198.0px;transform:scaleX(1.0030);">Список: Заявки пост ...</span>
<span class="t " style="top:1311px;font-size:17px;line-height:19px;height:19px;color:#222222;left:388.5px;transform:scaleX(0.9836);">Заявка поставщикам  ..</span>
<div style="left:0px;top:1342px;width:2159px;height:1px;background:#d9d9d9"></div>
<div style="left:297px;top:1345px;width:1px;height:25px;background:#dadada"></div>
<div style="left:603px;top:1345px;width:1px;height:25px;background:#dadada"></div>
<div style="left:661px;top:1345px;width:1px;height:25px;background:#dadada"></div>
<div style="left:1117px;top:1345px;width:1px;height:25px;background:#dadada"></div>
<svg style="left:4px;top:1348px" width="19" height="21" viewBox="0 0 19 21"><defs><linearGradient id="dbt" x1="0" y1="0" x2="1" y2="1"><stop offset="0" stop-color="#d9d9ec"/><stop offset="1" stop-color="#8f8fbf"/></linearGradient></defs><path d="M1 2.2Q9 -0.6 17.6 1.4V19Q9 21.4 1.6 19.6Z" fill="url(#dbt)"/><path d="M1.2 6H17.6V15.4H1.5Z" fill="#2f8fe4"/><path d="M1.2 7.7H17.6M1.3 10.6H17.6M1.4 13.5H17.6" stroke="#8cc6f5" stroke-width="1.1"/><path d="M1.5 15.4H17.6V19Q9 21.4 1.6 19.6Z" fill="#8c8cc0"/><path d="M17.6 1.4V19" stroke="#7a7ab0" stroke-width="1"/></svg>
<span class="t " style="top:1349px;font-size:18px;line-height:20px;height:20px;color:#222222;left:30.0px;transform:scaleX(0.9147);">База даних: TASA3@TITAN</span>
<svg style="left:303px;top:1347px" width="18" height="23" viewBox="0 0 18 23"><circle cx="6.4" cy="6.6" r="5.6" fill="#e8301c"/><path d="M1.2 21.2Q0.6 14.6 6 13.6H12.6Q17.6 14.6 17 21.2Q9 22.6 1.2 21.2Z" fill="#9aa0e6" stroke="#7c84d6" stroke-width="0.6"/><path d="M6.2 13.4H12.6L9.4 17Z" fill="#f0f0fa"/><circle cx="9.8" cy="9.4" r="5.2" fill="#9098e0" stroke="#7a82d2" stroke-width="0.6"/><path d="M7 8.2Q9 5.6 12 7" stroke="#dfe3fb" stroke-width="1.4" fill="none"/><path d="M6.4 11.6H13.2Q12.6 15.2 9.8 15.2Q7 15.2 6.4 11.6Z" fill="#f0a04a"/></svg>
<span class="t " style="top:1349px;font-size:18px;line-height:20px;height:20px;color:#222222;left:328.5px;transform:scaleX(0.8951);">Користувач: GIFT</span>
<svg style="left:607px;top:1346px" width="21" height="24" viewBox="0 0 21 24"><path d="M12.6 0.6Q14.6 2 15.6 5.2" stroke="#444" stroke-width="1.1" fill="none"/><path d="M0.6 11Q0.4 8 3 5.6Q6 3 11.4 3.6Q14.4 4 16.4 6L20 8.6V19.4L16 20.6H9L3.4 18.6L0.8 16Z" fill="#8e92d4"/><path d="M2.4 7.6Q6 4.4 11.4 4.6Q14 5 15.4 6.4Q10 10.6 2.4 7.6Z" fill="#b9bce8"/><path d="M5.6 10.4L2.4 20.4" stroke="#5a4a10" stroke-width="4.2"/><path d="M5.6 10.4L2.4 20.4" stroke="#f7cf2a" stroke-width="2.4" stroke-dasharray="3 1.4"/><path d="M13.6 13.4L11 23" stroke="#5a4a10" stroke-width="4.2"/><path d="M13.6 13.4L11 23" stroke="#f7cf2a" stroke-width="2.4" stroke-dasharray="3 1.4"/></svg>
<span class="t " style="top:1349px;font-size:18px;line-height:20px;height:20px;color:#222222;left:635.0px;transform:scaleX(0.9485);">4</span>
<span class="t " style="top:1349px;font-size:18px;line-height:20px;height:20px;color:#222222;left:666.0px;transform:scaleX(0.9217);">Кассовый аппарат не подключен</span>
<span class="t " style="top:1349px;font-size:18px;line-height:20px;height:20px;color:#222222;left:1123.0px;transform:scaleX(0.9066);">Зона: Склад [1]</span>
<div style="left:0px;top:1371px;width:2159px;height:1px;background:#0a0a0a"></div>
<div style="left:450px;top:384px;width:399px;height:633px;background:#f2f2f2;border:2px solid #a3a3a3;"></div>
<div style="left:452px;top:386px;width:45px;height:629px;background:#f0f0f0"></div>
<span class="t " style="top:395px;font-size:18px;line-height:20px;height:20px;color:#222222;left:500.0px;transform:scaleX(0.9928);">Додати</span>
<span class="t " style="top:395px;font-size:18px;line-height:20px;height:20px;color:#222222;left:789.0px;transform:scaleX(1.0410);">Ins</span>
<svg style="left:460px;top:394px" width="22" height="22" viewBox="0 0 23 23"><path d="M9 1.4H14V9H21.6V14H14V21.6H9V14H1.4V9H9Z" fill="#6fd268" stroke="#3fae3a" stroke-width="1.5" stroke-linejoin="round"/><path d="M10 3.2H13V10H19.8V12H13" stroke="#d4f5d2" stroke-width="1.2" fill="none" opacity="0.7"/></svg>
<span class="t " style="top:428px;font-size:18px;line-height:20px;height:20px;color:#222222;left:500.5px;transform:scaleX(0.9701);">Видалити</span>
<svg style="left:828px;top:432px" width="7" height="11" viewBox="0 0 7 11"><path d="M0.5 0.5L6 5.5L0.5 10.5Z" fill="#111"/></svg>
<span class="t " style="top:461px;font-size:18px;line-height:20px;height:20px;color:#222222;left:500.5px;transform:scaleX(0.9662);">Редагувати</span>
<svg style="left:828px;top:465px" width="7" height="11" viewBox="0 0 7 11"><path d="M0.5 0.5L6 5.5L0.5 10.5Z" fill="#111"/></svg>
<span class="t " style="top:494px;font-size:18px;line-height:20px;height:20px;color:#222222;left:500.0px;transform:scaleX(1.0013);">Альтернативний перегляд</span>
<span class="t " style="top:494px;font-size:18px;line-height:20px;height:20px;color:#222222;left:746.0px;transform:scaleX(1.0067);">Shift+F4</span>
<div style="left:498px;top:524px;width:346px;height:1px;background:#d7d7d7"></div>
<span class="t " style="top:536px;font-size:18px;line-height:20px;height:20px;color:#222222;left:500.0px;transform:scaleX(1.0932);">Друк</span>
<span class="t " style="top:536px;font-size:18px;line-height:20px;height:20px;color:#222222;left:794.5px;transform:scaleX(0.9279);">F2</span>
<svg style="left:458px;top:532px" width="26" height="26" viewBox="0 0 26 26"><path d="M6 1.5H16L20 5.5V10H6Z" fill="#eef5ff" stroke="#a9cbf3" stroke-width="1.2"/><path d="M16 1.5V5.5H20" fill="#cfe3fb" stroke="#a9cbf3" stroke-width="1"/><rect x="1.5" y="9.5" width="23" height="11.5" rx="3" fill="#d2d2d2" stroke="#bdbdbd" stroke-width="1"/><rect x="2.5" y="10.5" width="21" height="4" rx="2" fill="#e6e6e6"/><rect x="5" y="17.5" width="16" height="2.2" fill="#7d7d7d"/><rect x="6" y="19.5" width="14" height="5" fill="#f2f8ff" stroke="#a9cbf3" stroke-width="1.2"/><circle cx="21" cy="12.5" r="0.9" fill="#666"/></svg>
<span class="t " style="top:569px;font-size:18px;line-height:20px;height:20px;color:#222222;left:500.5px;transform:scaleX(1.0239);">Обмін даними</span>
<svg style="left:828px;top:573px" width="7" height="11" viewBox="0 0 7 11"><path d="M0.5 0.5L6 5.5L0.5 10.5Z" fill="#111"/></svg>
<div style="left:498px;top:599px;width:346px;height:1px;background:#d7d7d7"></div>
<span class="t " style="top:611px;font-size:18px;line-height:20px;height:20px;color:#6d6d6d;left:500.5px;transform:scaleX(1.0091);">Зробити документ активним</span>
<span class="t " style="top:611px;font-size:18px;line-height:20px;height:20px;color:#8a8a8a;left:759.5px;transform:scaleX(1.0690);">Ctrl+A</span>
<span class="t " style="top:644px;font-size:18px;line-height:20px;height:20px;color:#222222;left:500.5px;transform:scaleX(1.0115);">Зробити документ пасивним</span>
<div style="left:498px;top:674px;width:346px;height:1px;background:#d7d7d7"></div>
<span class="t " style="top:686px;font-size:18px;line-height:20px;height:20px;color:#222222;left:500.5px;transform:scaleX(1.0176);">Ціноутворення</span>
<svg style="left:828px;top:690px" width="7" height="11" viewBox="0 0 7 11"><path d="M0.5 0.5L6 5.5L0.5 10.5Z" fill="#111"/></svg>
<div style="left:498px;top:716px;width:346px;height:1px;background:#d7d7d7"></div>
<span class="t " style="top:728px;font-size:18px;line-height:20px;height:20px;color:#222222;left:500.5px;transform:scaleX(0.9803);">Сервіс</span>
<svg style="left:828px;top:732px" width="7" height="11" viewBox="0 0 7 11"><path d="M0.5 0.5L6 5.5L0.5 10.5Z" fill="#111"/></svg>
<span class="t " style="top:761px;font-size:18px;line-height:20px;height:20px;color:#222222;left:500.5px;transform:scaleX(0.9756);">Стан</span>
<svg style="left:828px;top:765px" width="7" height="11" viewBox="0 0 7 11"><path d="M0.5 0.5L6 5.5L0.5 10.5Z" fill="#111"/></svg>
<div style="left:454px;top:787px;width:394px;height:33px;background:#91c9f7"></div>
<span class="t " style="top:794px;font-size:18px;line-height:20px;height:20px;color:#222222;left:500.5px;transform:scaleX(1.0081);">Інформація</span>
<svg style="left:828px;top:798px" width="7" height="11" viewBox="0 0 7 11"><path d="M0.5 0.5L6 5.5L0.5 10.5Z" fill="#fff"/></svg>
<span class="t " style="top:827px;font-size:18px;line-height:20px;height:20px;color:#222222;left:500.5px;transform:scaleX(1.0123);">Історія</span>
<span class="t " style="top:827px;font-size:18px;line-height:20px;height:20px;color:#222222;left:767.0px;transform:scaleX(1.0571);">Ctrl+I</span>
<div style="left:498px;top:857px;width:346px;height:1px;background:#d7d7d7"></div>
<span class="t " style="top:869px;font-size:18px;line-height:20px;height:20px;color:#222222;left:500.5px;transform:scaleX(1.0157);">Оновити</span>
<span class="t " style="top:869px;font-size:18px;line-height:20px;height:20px;color:#222222;left:785.5px;transform:scaleX(0.9184);">F12</span>
<svg style="left:460.2px;top:867.5px" width="22" height="22" viewBox="0 0 22 22"><defs><linearGradient id="r2a" x1="0" y1="0" x2="0" y2="1"><stop offset="0" stop-color="#6fbcf0"/><stop offset="1" stop-color="#bfe1f7"/></linearGradient><linearGradient id="r2b" x1="0" y1="0" x2="0" y2="1"><stop offset="0" stop-color="#dbeaf7"/><stop offset="1" stop-color="#3fa9f0"/></linearGradient></defs><path d="M10.8 20.6A10 10 0 0 1 2.4 5.2L6.6 7.6A5.2 5.2 0 0 0 10.8 15.8Z" fill="url(#r2a)" stroke="#63a8e2" stroke-width="0.7"/><path d="M0.6 0.5H10.8V9.6L7.6 6.6L5.2 9L1.8 5.6L4 3.4Z" fill="#8dd3fa" stroke="#5aa5e6" stroke-width="0.9" stroke-linejoin="round"/><path d="M10.8 0.8A10 10 0 0 1 19.4 15.8L15 13.4A5.2 5.2 0 0 0 10.8 5.6Z" fill="url(#r2b)" stroke="#8fc0ea" stroke-width="0.6"/><path d="M21.2 20.8H10.8V11.4L14 14.6L16.6 12L20 15.4L17.8 17.6Z" fill="#25b3fb" stroke="#2f8ad6" stroke-width="0.9" stroke-linejoin="round"/></svg>
<div style="left:498px;top:899px;width:346px;height:1px;background:#d7d7d7"></div>
<span class="t " style="top:911px;font-size:18px;line-height:20px;height:20px;color:#222222;left:500.5px;transform:scaleX(1.0205);">Інструменти</span>
<svg style="left:828px;top:915px" width="7" height="11" viewBox="0 0 7 11"><path d="M0.5 0.5L6 5.5L0.5 10.5Z" fill="#111"/></svg>
<span class="t " style="top:944px;font-size:18px;line-height:20px;height:20px;color:#222222;left:500.5px;transform:scaleX(1.0296);">Контроль</span>
<svg style="left:828px;top:948px" width="7" height="11" viewBox="0 0 7 11"><path d="M0.5 0.5L6 5.5L0.5 10.5Z" fill="#111"/></svg>
<div style="left:498px;top:974px;width:346px;height:1px;background:#d7d7d7"></div>
<span class="t " style="top:986px;font-size:18px;line-height:20px;height:20px;color:#222222;left:500.5px;transform:scaleX(1.0065);">Налаштувати відображення колонок</span>
<div style="left:840px;top:783px;width:348px;height:240px;background:#f2f2f2;border:2px solid #a3a3a3;"></div>
<div style="left:842px;top:785px;width:45px;height:236px;background:#f0f0f0"></div>
<span class="t " style="top:794px;font-size:18px;line-height:20px;height:20px;color:#222222;left:890.5px;transform:scaleX(1.0272);">Порівняння цін</span>
<span class="t " style="top:794px;font-size:18px;line-height:20px;height:20px;color:#222222;left:1133.0px;transform:scaleX(0.9279);">F3</span>
<span class="t " style="top:827px;font-size:18px;line-height:20px;height:20px;color:#222222;left:890.5px;transform:scaleX(0.9939);">Залишки в аптеках</span>
<span class="t " style="top:827px;font-size:18px;line-height:20px;height:20px;color:#222222;left:1133.0px;transform:scaleX(0.9279);">F7</span>
<span class="t " style="top:860px;font-size:18px;line-height:20px;height:20px;color:#222222;left:890.5px;transform:scaleX(0.9812);">Перегляд руху товару</span>
<span class="t " style="top:860px;font-size:18px;line-height:20px;height:20px;color:#222222;left:1099.0px;transform:scaleX(1.0385);">Ctrl+D</span>
<span class="t " style="top:893px;font-size:18px;line-height:20px;height:20px;color:#222222;left:890.5px;transform:scaleX(0.9778);">Рух товару по серії</span>
<span class="t " style="top:893px;font-size:18px;line-height:20px;height:20px;color:#222222;left:1051.0px;transform:scaleX(1.0352);">Shift+Ctrl+D</span>
<span class="t " style="top:926px;font-size:18px;line-height:20px;height:20px;color:#222222;left:890.5px;transform:scaleX(0.9726);">Перегляд поставок за 60 днів</span>
<span class="t " style="top:959px;font-size:18px;line-height:20px;height:20px;color:#222222;left:890.5px;transform:scaleX(1.0198);">Штрих-коди</span>
<span class="t " style="top:959px;font-size:18px;line-height:20px;height:20px;color:#222222;left:1100.5px;transform:scaleX(1.0294);">Ctrl+B</span>
<div style="left:844px;top:985px;width:340px;height:33px;background:#91c9f7"></div>
<span class="t " style="top:992px;font-size:18px;line-height:20px;height:20px;color:#222222;left:890.5px;transform:scaleX(1.0212);">Постачальники</span>
<div style="left:844px;top:987px;width:339px;height:35px;border:4px solid #ff0000;border-radius:2px;"></div>
<svg style="left:190px;top:375px" width="280" height="445" viewBox="0 0 280 445"><path d="M14.5 10.7L260.3 422.4L262.6 432.8L254.7 425.6L13.5 11.3Z" fill="#f60000"/><path d="M261.4 417.2L261.4 430.4L249.8 423.8" stroke="#f60000" stroke-width="4.6" stroke-linecap="round" stroke-linejoin="round" fill="none"/></svg>
</div>
</body></html>
